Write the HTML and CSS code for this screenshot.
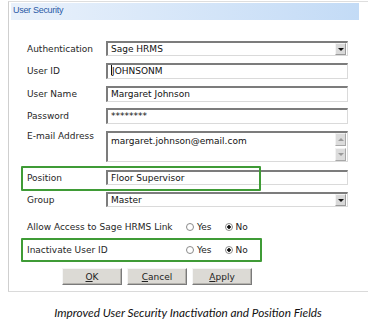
FILE: index.html
```html
<!DOCTYPE html>
<html lang="en">
<head>
    <meta charset="UTF-8">
    <title>User Security</title>
    <link rel="stylesheet" href="styles.css">
</head>
<body>
    <div class="panel">
        <div class="title">User Security</div>
        <div class="form">
            <div class="row r-auth">
                <span class="label">Authentication</span>
                <div class="field select">Sage HRMS<span class="drop"></span></div>
            </div>
            <div class="row r-id">
                <span class="label">User ID</span>
                <div class="field"><span class="caret"></span>JOHNSONM</div>
            </div>
            <div class="row r-name">
                <span class="label">User Name</span>
                <div class="field">Margaret Johnson</div>
            </div>
            <div class="row r-pass">
                <span class="label">Password</span>
                <div class="field">********</div>
            </div>
            <div class="row r-mail">
                <span class="label top">E-mail Address</span>
                <div class="field area">
                    margaret.johnson@email.com
                    <span class="scroll">
                        <span class="sbtn up"></span>
                        <span class="sbtn down"></span>
                    </span>
                </div>
            </div>
            <div class="row r-pos">
                <span class="label">Position</span>
                <div class="field">Floor Supervisor</div>
                <span class="mark"></span>
            </div>
            <div class="row r-group">
                <span class="label">Group</span>
                <div class="field select">Master<span class="drop"></span></div>
            </div>
            <div class="row opts r-allow">
                <span class="label">Allow Access to Sage HRMS Link</span>
                <div class="radios">
                    <span class="opt"><span class="radio"></span>Yes</span>
                    <span class="opt"><span class="radio on"></span>No</span>
                </div>
            </div>
            <div class="row opts r-inact">
                <span class="label">Inactivate User ID</span>
                <div class="radios">
                    <span class="opt"><span class="radio"></span>Yes</span>
                    <span class="opt"><span class="radio on"></span>No</span>
                </div>
            </div>
            <div class="buttons">
                <button class="btn"><u>O</u>K</button>
                <button class="btn"><u>C</u>ancel</button>
                <button class="btn"><u>A</u>pply</button>
            </div>
        </div>
    </div>
    <p class="caption">Improved User Security Inactivation and Position Fields</p>
</body>
</html>
```

FILE: styles.css
```css
body {
    margin: 0;
    font-family: "DejaVu Sans", Verdana, sans-serif;
    font-size: 9px;
    color: #262626;
    background: #fff;
}
.panel {
    margin: 1px 0 0 8px;
    border-left: 1px solid #cfcfcf;
    border-top: 1px solid #dedede;
    border-bottom: 1px solid #dadada;
}
.title {
    margin: 1px 0 0 2px;
    width: 348px;
    height: 17px;
    box-sizing: border-box;
    padding: 2px 0 0 2px;
    background: linear-gradient(to right, #e9f1fb, #c3dbf6);
    font-family: "Liberation Sans", Arial, sans-serif;
    font-size: 9px;
    letter-spacing: -0.3px;
    color: #2b5aa6;
}
.form {
    padding: 21px 0 6px 18px;
}
.row {
    position: relative;
    display: grid;
    grid-template-columns: 79px 242px;
    align-items: center;
}
.label.top {
    align-self: start;
}
.field {
    position: relative;
    height: 16px;
    box-sizing: border-box;
    border-top: 2px solid #7c7c7c;
    border-left: 2px solid #7c7c7c;
    border-right: 1px solid #dadada;
    border-bottom: 1px solid #dadada;
    padding-left: 3px;
    line-height: 13px;
    background: #fff;
    color: #111;
}
.caret {
    display: inline-block;
    width: 1px;
    height: 10px;
    background: #111;
    vertical-align: -1px;
}
.drop {
    position: absolute;
    right: 1px;
    top: 0;
    width: 11px;
    height: 12px;
    box-sizing: border-box;
    background: #d9d9d9;
    border: 1px solid #9a9a9a;
    border-top-color: #f4f4f4;
    border-left-color: #f4f4f4;
}
.drop::after {
    content: "";
    position: absolute;
    left: 2px;
    top: 4px;
    border-left: 3px solid transparent;
    border-right: 3px solid transparent;
    border-top: 3px solid #111;
}
.area {
    height: 31px;
    padding-top: 2px;
}
.scroll {
    position: absolute;
    right: 1px;
    top: 0;
    display: flex;
    flex-direction: column;
    gap: 2px;
}
.sbtn {
    position: relative;
    width: 11px;
    height: 13px;
    box-sizing: border-box;
    background: #dcdcdc;
    border: 1px solid #a8a8a8;
    border-top-color: #f2f2f2;
    border-left-color: #f2f2f2;
}
.sbtn::after {
    content: "";
    position: absolute;
    left: 2px;
    top: 4px;
    border-left: 3px solid transparent;
    border-right: 3px solid transparent;
}
.sbtn.up::after {
    border-bottom: 3px solid #9a9a9a;
}
.sbtn.down::after {
    border-top: 3px solid #9a9a9a;
}
.r-auth .field, .r-pos .field, .r-group .field {
    height: 15px;
}
.r-id { margin-top: 7px; }
.r-name { margin-top: 7px; }
.r-pass { margin-top: 6px; }
.r-mail { margin-top: 7px; }
.r-pos { margin-top: 8px; }
.r-group { margin-top: 7px; }
.mark {
    position: absolute;
    left: -6px;
    top: -4px;
    width: 240px;
    height: 25px;
    box-sizing: border-box;
    border: 2px solid #3f9b36;
    border-radius: 1px;
    pointer-events: none;
}
.opts {
    grid-template-columns: 159px auto;
    height: 14px;
}
.r-allow { margin-top: 13px; }
.r-inact {
    margin: 4px 0 0 -6px;
    width: 241px;
    height: 24px;
    box-sizing: border-box;
    border: 2px solid #3f9b36;
    border-radius: 1px;
    padding-left: 4px;
}
.radios {
    display: flex;
    align-items: center;
    gap: 13px;
}
.opt {
    display: inline-flex;
    align-items: center;
    gap: 3px;
    color: #222;
}
.radio {
    display: inline-block;
    width: 8px;
    height: 8px;
    box-sizing: border-box;
    border: 1px solid #8a8a8a;
    border-radius: 50%;
    background: #fff;
}
.radio.on {
    background: radial-gradient(circle, #111 0 1.5px, #fff 2px);
}
.buttons {
    display: flex;
    gap: 5px;
    margin-top: 6px;
    padding-left: 35px;
}
.btn {
    width: 60px;
    height: 17px;
    padding: 0;
    box-sizing: border-box;
    font-family: "DejaVu Sans", Verdana, sans-serif;
    font-size: 9px;
    color: #222;
    background: #dcdad5;
    border: 1px solid #7a7a7a;
    border-top-color: #f6f6f6;
    border-left-color: #f6f6f6;
    box-shadow: inset -1px -1px 0 #b4b2ad;
}
.caption {
    margin: 13px 0 0 8px;
    text-align: center;
    font-family: Lato, "Open Sans", sans-serif;
    font-style: italic;
    font-size: 11.8px;
    line-height: 15px;
    color: #111;
}
```
